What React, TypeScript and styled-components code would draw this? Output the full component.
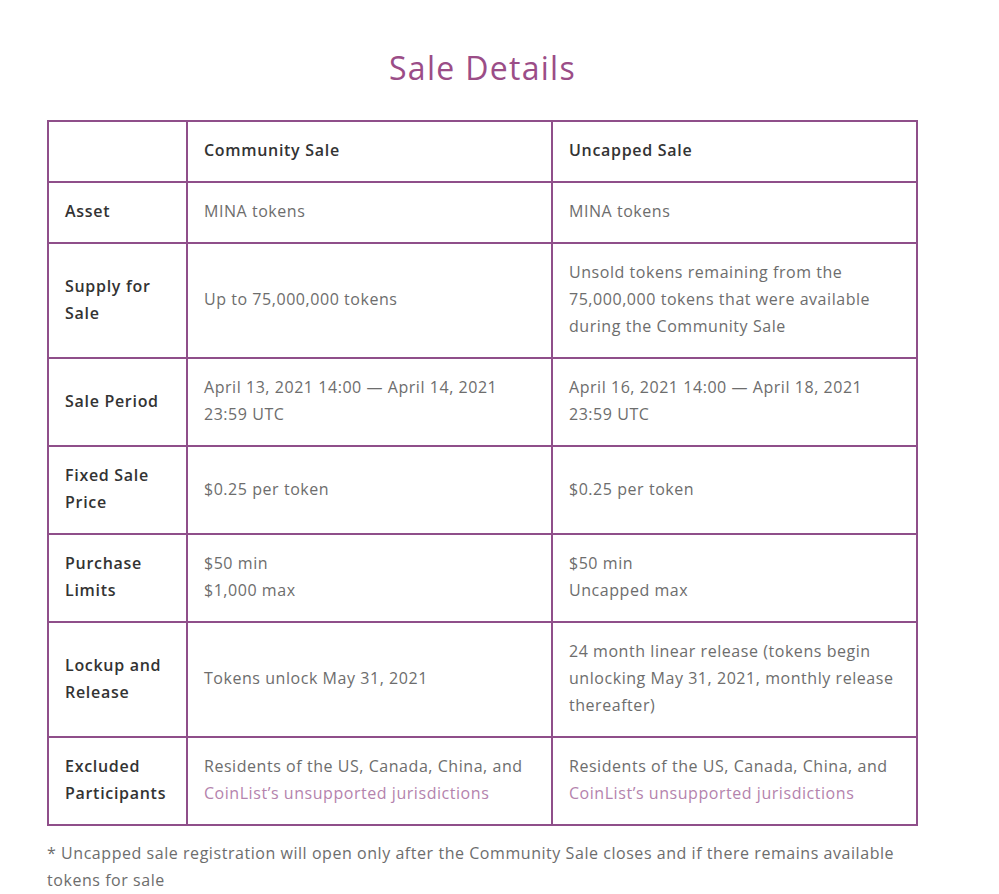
import styled, { createGlobalStyle } from 'styled-components';
import { FC, ReactNode } from 'react';

const GlobalStyle = createGlobalStyle`
  body {
    margin: 0;
    background: #fff;
    font-family: 'Open Sans', 'Liberation Sans', sans-serif;
  }
`;

const Page = styled.div`
  width: 871px;
  margin-left: 47px;
  padding-top: 45px;
`;

const Title = styled.h2`
  margin: 0 0 29px;
  text-align: center;
  font-size: 32px;
  font-weight: 400;
  letter-spacing: 1.3px;
  line-height: 46px;
  color: #9b4d87;
`;

const Table = styled.table`
  width: 100%;
  border-collapse: collapse;
  border: 2px solid #8f4f8a;
  font-size: 16px;
  line-height: 27px;
  letter-spacing: 0.55px;
`;

const Cell = styled.td<{ $head?: boolean; $label?: boolean }>`
  border: 2px solid #8f4f8a;
  padding: 15px 16px 17px;
  vertical-align: middle;
  text-align: left;
  color: ${(p) => (p.$head || p.$label ? '#333' : '#6d6d6d')};
  font-weight: ${(p) => (p.$head || p.$label ? 600 : 400)};
  letter-spacing: ${(p) => (p.$head || p.$label ? '0.7px' : '0.55px')};
`;

const LinkText = styled.a`
  color: #b483ad;
  text-decoration: none;
`;

const Note = styled.p`
  margin: 14px 0 0;
  font-size: 16px;
  line-height: 27px;
  letter-spacing: 0.55px;
  color: #6d6d6d;
`;

type Row = { label: ReactNode; community: ReactNode; uncapped: ReactNode };

const excluded = (
  <>
    Residents of the US, Canada, China, and
    <br />
    <LinkText>CoinList’s unsupported jurisdictions</LinkText>
  </>
);

const rows: Row[] = [
  { label: 'Asset', community: 'MINA tokens', uncapped: 'MINA tokens' },
  {
    label: (
      <>
        Supply for
        <br />
        Sale
      </>
    ),
    community: 'Up to 75,000,000 tokens',
    uncapped: 'Unsold tokens remaining from the 75,000,000 tokens that were available during the Community Sale',
  },
  {
    label: 'Sale Period',
    community: 'April 13, 2021 14:00 — April 14, 2021 23:59 UTC',
    uncapped: 'April 16, 2021 14:00 — April 18, 2021 23:59 UTC',
  },
  {
    label: (
      <>
        Fixed Sale
        <br />
        Price
      </>
    ),
    community: '$0.25 per token',
    uncapped: '$0.25 per token',
  },
  {
    label: (
      <>
        Purchase
        <br />
        Limits
      </>
    ),
    community: (
      <>
        $50 min
        <br />
        $1,000 max
      </>
    ),
    uncapped: (
      <>
        $50 min
        <br />
        Uncapped max
      </>
    ),
  },
  {
    label: (
      <>
        Lockup and
        <br />
        Release
      </>
    ),
    community: 'Tokens unlock May 31, 2021',
    uncapped: '24 month linear release (tokens begin unlocking May 31, 2021, monthly release thereafter)',
  },
  {
    label: (
      <>
        Excluded
        <br />
        Participants
      </>
    ),
    community: excluded,
    uncapped: excluded,
  },
];

const App: FC = () => (
  <>
    <GlobalStyle />
    <Page>
      <Title>Sale Details</Title>
      <Table>
        <colgroup>
          <col style={{ width: 139 }} />
          <col style={{ width: 366 }} />
          <col style={{ width: 366 }} />
        </colgroup>
        <thead>
          <tr>
            <Cell as="th" $head />
            <Cell as="th" $head>
              Community Sale
            </Cell>
            <Cell as="th" $head>
              Uncapped Sale
            </Cell>
          </tr>
        </thead>
        <tbody>
          {rows.map((r, i) => (
            <tr key={i}>
              <Cell $label>{r.label}</Cell>
              <Cell>{r.community}</Cell>
              <Cell>{r.uncapped}</Cell>
            </tr>
          ))}
        </tbody>
      </Table>
      <Note>
        * Uncapped sale registration will open only after the Community Sale closes and if there remains available
        tokens for sale
      </Note>
    </Page>
  </>
);

export default App;
